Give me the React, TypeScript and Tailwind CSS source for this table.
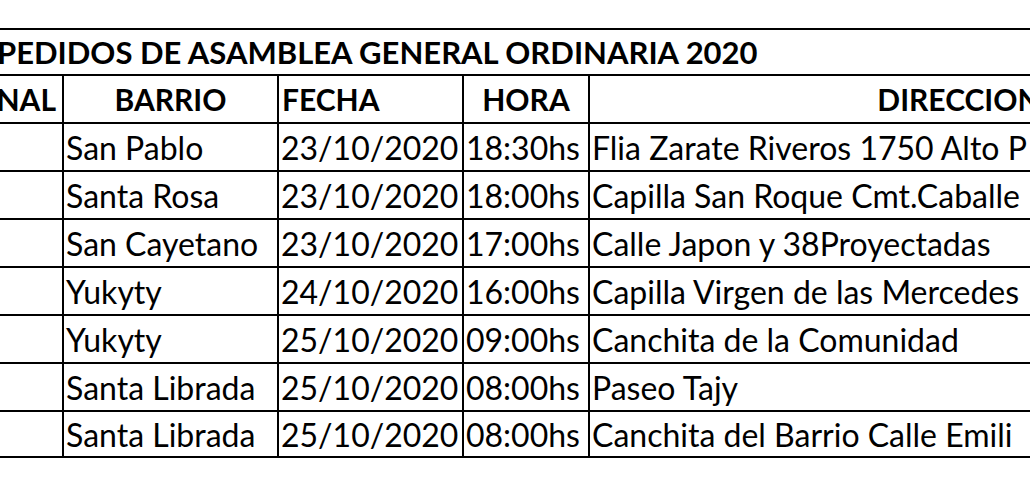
import React from "react";

interface Row {
  barrio: string;
  fecha: string;
  hora: string;
  direccion: string;
}

const rows: Row[] = [
  { barrio: "San Pablo", fecha: "23/10/2020", hora: "18:30hs", direccion: "Flia Zarate Riveros 1750 Alto P" },
  { barrio: "Santa Rosa", fecha: "23/10/2020", hora: "18:00hs", direccion: "Capilla San Roque Cmt.Caballe" },
  { barrio: "San Cayetano", fecha: "23/10/2020", hora: "17:00hs", direccion: "Calle Japon y 38Proyectadas" },
  { barrio: "Yukyty", fecha: "24/10/2020", hora: "16:00hs", direccion: "Capilla Virgen de las Mercedes" },
  { barrio: "Yukyty", fecha: "25/10/2020", hora: "09:00hs", direccion: "Canchita de la Comunidad" },
  { barrio: "Santa Librada", fecha: "25/10/2020", hora: "08:00hs", direccion: "Paseo Tajy" },
  { barrio: "Santa Librada", fecha: "25/10/2020", hora: "08:00hs", direccion: "Canchita del Barrio Calle Emili" },
];

const cols = "grid grid-cols-[64px_215px_185px_126px_738px]";

const App: React.FC = () => {
  return (
    <div className="w-[1030px] h-[482px] overflow-hidden bg-white pt-[28px] font-['Lato',sans-serif] text-black">
      <div className="w-[1328px]">
        {/* titulo */}
        <div className="h-[48px] border-t-2 border-b-2 border-black flex items-center">
          <span className="-ml-[3px] text-[31px] font-bold leading-none whitespace-nowrap">
            PEDIDOS DE ASAMBLEA GENERAL ORDINARIA 2020
          </span>
        </div>

        {/* cabecera */}
        <div className={`${cols} h-[48px] border-b-2 border-black text-[30px] font-bold leading-none`}>
          <div className="border-r-2 border-black flex items-center justify-end pr-[6px]">NAL</div>
          <div className="border-r-2 border-black flex items-center justify-center">BARRIO</div>
          <div className="border-r-2 border-black flex items-center pl-[3px]">FECHA</div>
          <div className="border-r-2 border-black flex items-center justify-center">HORA</div>
          <div className="flex items-center justify-center">DIRECCION</div>
        </div>

        {rows.map((r, i) => (
          <div
            key={i}
            className={`${cols} ${i === rows.length - 1 ? "h-[46px]" : "h-[48px]"} border-b-2 border-black text-[32px] leading-none`}
          >
            <div className="border-r-2 border-black"></div>
            <div className="border-r-2 border-black flex items-center pl-[2px] pt-[2px] whitespace-nowrap">{r.barrio}</div>
            <div className="border-r-2 border-black flex items-center pl-[2px] pt-[2px] whitespace-nowrap">{r.fecha}</div>
            <div className="border-r-2 border-black flex items-center pl-[2px] pt-[2px] whitespace-nowrap">{r.hora}</div>
            <div className="flex items-center pl-[2px] pt-[2px] whitespace-nowrap">{r.direccion}</div>
          </div>
        ))}
      </div>
    </div>
  );
};

export default App;
